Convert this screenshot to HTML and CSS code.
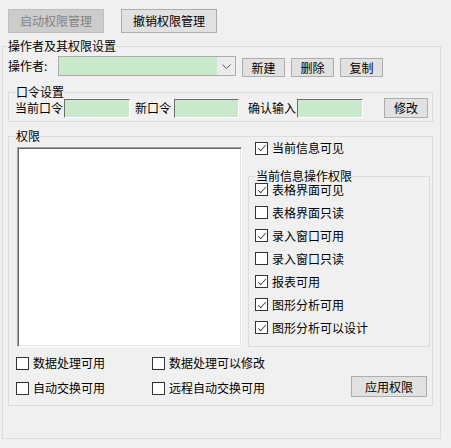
FILE: index.html
```html
<!DOCTYPE html>
<html>
<head>
<meta charset="utf-8">
<title>权限管理</title>
<link rel="stylesheet" href="styles.css">
</head>
<body>

<div class="topbar">
  <button class="btn btn-big" disabled>启动权限管理</button>
  <button class="btn btn-big">撤销权限管理</button>
</div>

<fieldset class="grp grp-main">
  <legend>操作者及其权限设置</legend>

  <div class="op-row">
    <span class="op-label">操作者:</span>
    <div class="combo">
      <div class="combo-field"></div>
      <div class="combo-arrow">
        <svg width="9" height="5" viewBox="0 0 9 5"><path d="M0.5 0.5 L4.5 4.5 L8.5 0.5" fill="none" stroke="#606060" stroke-width="1"/></svg>
      </div>
    </div>
    <button class="btn btn-sm">新建</button>
    <button class="btn btn-sm">删除</button>
    <button class="btn btn-sm">复制</button>
  </div>

  <fieldset class="grp grp-pwd">
    <legend>口令设置</legend>
    <div class="pwd-row">
      <span>当前口令</span><input class="field f1" type="text">
      <span class="lbl2">新口令</span><input class="field f2" type="text">
      <span class="lbl3">确认输入</span><input class="field" type="text">
      <button class="btn btn-mod">修改</button>
    </div>
  </fieldset>

  <fieldset class="grp grp-perm">
    <legend>权限</legend>
    <div class="perm-top">
      <div class="listbox"></div>
      <div class="perm-right">
        <label class="chk chk-top on">当前信息可见</label>
        <fieldset class="grp grp-ops">
          <legend>当前信息操作权限</legend>
          <div class="ops-list">
            <label class="chk on">表格界面可见</label>
            <label class="chk">表格界面只读</label>
            <label class="chk on">录入窗口可用</label>
            <label class="chk">录入窗口只读</label>
            <label class="chk on">报表可用</label>
            <label class="chk on">图形分析可用</label>
            <label class="chk on">图形分析可以设计</label>
          </div>
        </fieldset>
      </div>
    </div>
    <div class="perm-bottom">
      <button class="btn btn-apply">应用权限</button>
      <label class="chk">数据处理可用</label>
      <label class="chk">数据处理可以修改</label>
      <label class="chk">自动交换可用</label>
      <label class="chk">远程自动交换可用</label>
    </div>
  </fieldset>
</fieldset>

</body>
</html>
```

FILE: styles.css
```css
body {
  margin: 0;
  width: 451px;
  height: 448px;
  background-color: #f0f0f0;
  font-family: "Noto Sans CJK SC", "Microsoft YaHei", sans-serif;
  font-size: 12px;
  line-height: 14px;
  color: #000;
}

/* buttons */
.btn {
  margin: 0;
  padding: 0;
  font: inherit;
  color: #000;
  background-color: #e1e1e1;
  border: 1px solid #adadad;
  border-radius: 0;
}

.btn:disabled {
  background-color: #cccccc;
  border-color: #bfbfbf;
  color: #838383;
}

.topbar {
  display: flex;
  gap: 17px;
  padding: 9px 0 0 8px;
}

.btn-big {
  width: 96px;
  height: 24px;
}

.btn-sm {
  width: 43px;
  height: 19px;
  margin-top: 2px;
  margin-left: 6px;
}

.btn-mod {
  width: 44px;
  height: 20px;
  margin-left: 21px;
}

.btn-apply {
  grid-column: 3;
  grid-row: 1 / 3;
  align-self: end;
  width: 76px;
  height: 21px;
  margin-bottom: 3px;
}

/* group boxes */
.grp {
  margin: 0;
  border: 1px solid #dcdcdc;
  min-width: 0;
}

.grp legend {
  padding: 0;
  line-height: 14px;
}

.grp-main {
  margin: 6px 0 0 2px;
  width: 439px;
  box-sizing: border-box;
  padding: 3px 7px 32px 5px;
}

.grp-pwd {
  margin-top: 8px;
  width: 425px;
  box-sizing: border-box;
  padding: 0 0 3px 6px;
}

.grp-pwd legend {
  margin-left: 1px;
}

.grp-perm {
  margin-top: 7px;
  width: 425px;
  box-sizing: border-box;
  padding: 4px 0 5px 8px;
}

.grp-perm legend {
  margin-left: -1px;
}

/* operator row */
.op-row {
  display: flex;
  align-items: flex-start;
  height: 21px;
}

.op-label {
  width: 50px;
  line-height: 20px;
}

.combo {
  display: flex;
  width: 178px;
  height: 20px;
  box-sizing: border-box;
  border: 1px solid #adadad;
}

.combo-field {
  flex: 1;
  background-color: #c9e8cc;
}

.combo-arrow {
  width: 18px;
  display: flex;
  align-items: center;
  justify-content: center;
  background-color: #ececec;
}

/* password row */
.pwd-row {
  display: flex;
  align-items: center;
  margin-top: -1px;
  height: 20px;
}

.field {
  margin: 0 0 0 1px;
  padding: 0;
  width: 66px;
  height: 19px;
  box-sizing: border-box;
  background-color: #c9e8cc;
  border-style: solid;
  border-width: 1px;
  border-color: #6d6d6d #ffffff #ffffff #6d6d6d;
  outline: none;
}

.lbl2 {
  margin-left: 5px;
}

.f2 {
  margin-left: 3px;
  width: 65px;
}

.lbl3 {
  margin-left: 9px;
}

/* permissions */
.perm-top {
  display: flex;
  align-items: flex-start;
}

.listbox {
  width: 225px;
  height: 200px;
  box-sizing: border-box;
  background-color: #fff;
  border-style: solid;
  border-width: 1px;
  border-color: #a0a0a0 #ffffff #ffffff #a0a0a0;
  box-shadow: inset 1px 1px 0 #696969, inset -1px -1px 0 #e3e3e3;
}

.perm-right {
  margin: -6px 0 0 6px;
  width: 182px;
}

.chk-top {
  height: 14px;
  margin-left: 7px;
}

.grp-ops {
  margin-top: 15px;
  width: 182px;
  box-sizing: border-box;
  padding: 0 0 7px 6px;
}

.grp-ops legend {
  margin-left: 1px;
  line-height: 12px;
}

.ops-list {
  margin-top: -4px;
}

.ops-list .chk {
  height: 23px;
}

.perm-bottom {
  display: grid;
  grid-template-columns: 136px 199px 76px;
  grid-template-rows: 24px 24px;
  row-gap: 1px;
  margin-left: -1px;
  padding-top: 4px;
}

/* checkboxes */
.chk {
  display: flex;
  align-items: center;
  white-space: nowrap;
}

.chk::before {
  content: "";
  flex: none;
  width: 13px;
  height: 13px;
  box-sizing: border-box;
  margin-right: 4px;
  border: 1px solid #333;
  background-color: #fff;
}

.chk.on::after {
  content: "";
  position: absolute;
  width: 7px;
  height: 3px;
  margin: -2px 0 0 3px;
  border-left: 1.5px solid #4a4a4a;
  border-bottom: 1.5px solid #4a4a4a;
  transform: rotate(-48deg);
}
```
